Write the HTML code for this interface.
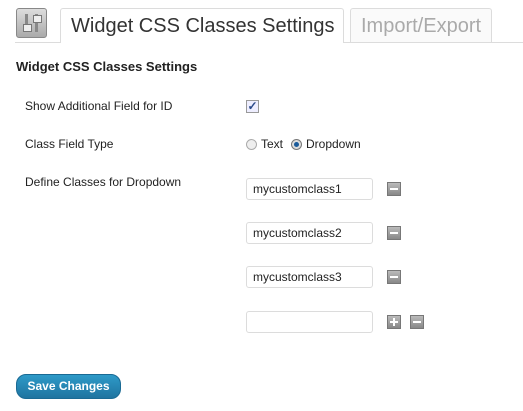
<!DOCTYPE html>
<html><head><style>
body{margin:0;width:523px;height:411px;background:#fff;font-family:"Liberation Sans",Arial,sans-serif;color:#333;position:relative;overflow:hidden}
.a{position:absolute}
.tab{position:absolute;top:8px;height:34px;border:1px solid #dcdcdc;border-bottom:none;border-radius:3px 3px 0 0;font-size:20px;line-height:34px;padding:0 10px;box-sizing:border-box;white-space:nowrap;overflow:hidden}
.lbl{position:absolute;left:25px;font-size:12px;color:#222}
.inp{position:absolute;left:246px;width:127px;height:22px;border:1px solid #dcdcdc;border-radius:3px;box-sizing:border-box;font-size:12px;line-height:20px;padding-left:6px;color:#222}
.btn{position:absolute;width:14px;height:14px;background:linear-gradient(#bbb,#888);border:1px solid #777;box-sizing:border-box}
.btn:after{content:"";position:absolute;left:2px;top:5px;width:8px;height:2px;background:#fff}
.plus:before{content:"";position:absolute;left:5px;top:2px;width:2px;height:8px;background:#fff}
</style></head><body>
<div class="a" style="left:16px;top:8px;width:31px;height:30px;border:1px solid #888;border-radius:3px;background:linear-gradient(#ddd,#aaa);box-sizing:border-box">
<div class="a" style="left:8px;top:5px;width:3px;height:18px;background:#888"></div>
<div class="a" style="left:18px;top:5px;width:3px;height:18px;background:#888"></div>
<div class="a" style="left:6px;top:15px;width:7px;height:6px;background:#eee;border:1px solid #777"></div>
<div class="a" style="left:16px;top:6px;width:7px;height:6px;background:#eee;border:1px solid #777"></div>
</div>
<div class="a" style="left:15px;top:42px;width:508px;height:1px;background:#dcdcdc"></div>
<div class="tab" style="left:60px;width:284px;background:#fff;height:35px;color:#333">Widget CSS Classes Settings</div>
<div class="tab" style="left:350px;width:142px;color:#aaa;background:#fafafa">Import/Export</div>
<div class="a" style="left:16px;top:59px;font-size:13px;font-weight:bold;color:#222">Widget CSS Classes Settings</div>
<div class="lbl" style="top:99px">Show Additional Field for ID</div>
<div class="a" style="left:246px;top:100px;width:13px;height:13px;border:1px solid #999;box-sizing:border-box;background:#eef;color:#2a4a8a;font-size:12px;line-height:11px;text-align:center;font-weight:bold">✓</div>
<div class="lbl" style="top:137px">Class Field Type</div>
<div class="a" style="left:246px;top:139px;width:11px;height:11px;border:1px solid #aaa;border-radius:50%;background:#eee;box-sizing:border-box"></div>
<div class="a" style="left:261px;top:137px;font-size:12px;color:#222">Text</div>
<div class="a" style="left:291px;top:139px;width:11px;height:11px;border:1px solid #777;border-radius:50%;background:#ddd;box-sizing:border-box"><div class="a" style="left:2px;top:2px;width:5px;height:5px;border-radius:50%;background:#1a5a9a"></div></div>
<div class="a" style="left:306px;top:137px;font-size:12px;color:#222">Dropdown</div>
<div class="lbl" style="top:175px">Define Classes for Dropdown</div>
<div class="inp" style="top:178px">mycustomclass1</div>
<div class="btn" style="left:387px;top:182px"></div>
<div class="inp" style="top:222px">mycustomclass2</div>
<div class="btn" style="left:387px;top:226px"></div>
<div class="inp" style="top:266px">mycustomclass3</div>
<div class="btn" style="left:387px;top:270px"></div>
<div class="inp" style="top:311px"></div>
<div class="btn plus" style="left:387px;top:315px"></div>
<div class="btn" style="left:410px;top:315px"></div>
<div class="a" style="left:16px;top:374px;width:105px;height:25px;border-radius:10px;background:linear-gradient(#2e9ac8,#1f74a0);border:1px solid #1a6a94;box-sizing:border-box;color:#fff;font-size:12px;font-weight:bold;text-align:center;line-height:23px">Save Changes</div>
</body></html>
